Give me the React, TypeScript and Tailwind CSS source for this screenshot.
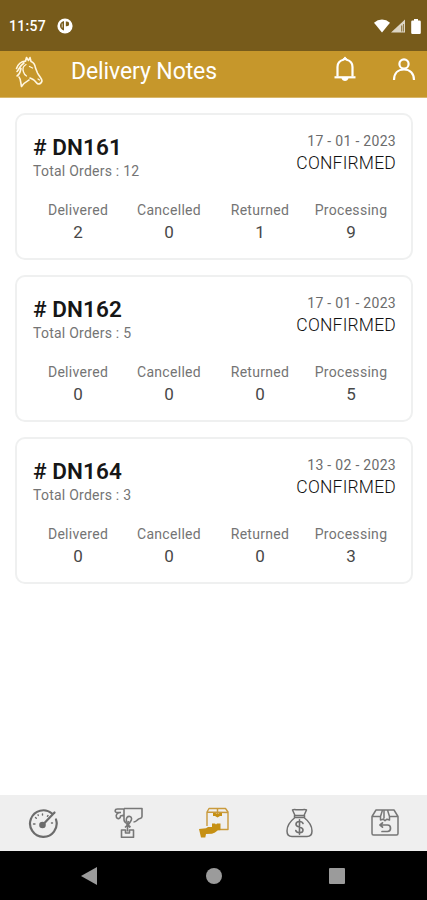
type Note = {
    id: string;
    total: number;
    date: string;
    counts: number[];
};

const notes: Note[] = [
    { id: "DN161", total: 12, date: "17 - 01 - 2023", counts: [2, 0, 1, 9] },
    { id: "DN162", total: 5, date: "17 - 01 - 2023", counts: [0, 0, 0, 5] },
    { id: "DN164", total: 3, date: "13 - 02 - 2023", counts: [0, 0, 0, 3] },
];

const labels = ["Delivered", "Cancelled", "Returned", "Processing"];

const StatusBar = () => {
    return (
        <div className="h-[51px] shrink-0 bg-[#775b1b] flex items-center pt-px pl-[9px] pr-[6px] text-white">
            <span className="text-[14px] leading-4 font-medium tracking-[0.3px] w-12">11:57</span>
            <svg className="w-4 h-4" viewBox="0 0 16 16">
                <circle cx="8" cy="8" r="7.6" fill="#fff" />
                <path d="M7 3v9.500Q3 11 3 7.500T7 3z" fill="#775b1b" />
                <path d="M8.800 3.500h1a2.400 2.400 0 0 1 0 4.800h-1z" fill="#775b1b" />
                <path d="M5.200 5.500v4" stroke="#fff" strokeWidth=".7" />
            </svg>
            <svg className="ml-auto w-4 h-[14px]" viewBox="0 0 16 14">
                <path d="M0 3.700Q3.500.5 8 .5t8 3.200L8 13.500z" fill="#fff" />
            </svg>
            <svg className="ml-px w-[15px] h-[14px]" viewBox="0 0 15 14">
                <path d="M0 13.500L14 .5v13z" fill="#fff" fillOpacity=".75" />
                <path d="M10 6.500h1.300v6H10zM12 5h1v7.500h-1z" fill="#775b1b" fillOpacity=".7" />
            </svg>
            <svg className="ml-[5px] w-[10px] h-[15px]" viewBox="0 0 10 15">
                <path d="M3 0h4v1.600h1.600q1.200 0 1.200 1.200v11q0 1.200-1.200 1.200H1.400Q.2 15 .2 13.800v-11q0-1.200 1.200-1.200H3z" fill="#fff" />
            </svg>
        </div>
    );
};

const Horse = () => {
    return (
        <svg className="w-7 h-8" viewBox="0 0 28 32" fill="none" stroke="#fff6df" strokeWidth="1.600" strokeLinecap="round" strokeLinejoin="round">
            <path d="M10.500 5l1-3.500 2 3 1.500-3 1 4c3 1 4 3 4.500 6.500l2 5c1.500 3 4.500 5.500 4.500 8-.5 2-2 3-4 3-1.500-.5-2-2-3.500-3.500-1.500-1.500-3-1.800-4.500-2.500" />
            <path d="M10.500 5C6 5.500 3 8 1.500 12.500M9 7C5 9.500 4 13.500 2 15.500M6 12.500c-1 4-1 6-4 7.500M4 21c2 2 1.500 6 2.500 9.500 2-3.500 4-4.500 7.500-6.500" />
            <path d="M11 8.500C8 10 7.500 13 8.500 16c.5 2 1.500 3 3 4M14.500 10.500l3 1.500M23 23l1.500 1" strokeWidth="1.300" />
        </svg>
    );
};

const Header = () => {
    return (
        <div className="h-[47px] shrink-0 bg-[#c6972b] border-b border-[#d8b76b] flex items-start pl-[15px] pr-[11px] text-white">
            <div className="mt-[5px]">
                <Horse />
            </div>
            <h1 className="ml-7 mt-[6px] text-[23px] leading-[30px] tracking-[-0.1px]">Delivery Notes</h1>
            <svg className="ml-auto mt-[5px] w-[22px] h-[26px]" viewBox="0 0 22 26" fill="none" stroke="#fff" strokeWidth="2.200">
                <path d="M3.500 20.500V11c0-4 2.500-6.500 5.800-7.300L11 2.500l1.700 1.200C16 4.500 18.500 7 18.500 11v9.500" />
                <path d="M.5 21.300h21" />
                <path d="M7.500 22h7c-.5 4-6.500 4-7 0z" fill="#fff" stroke="none" />
                <path d="M11 .5l2.500 3h-5z" fill="#fff" stroke="none" />
            </svg>
            <svg className="ml-9 mt-[7px] w-6 h-6" viewBox="0 0 24 24" fill="none" stroke="#fff" strokeWidth="2.200">
                <circle cx="12" cy="6" r="4.600" />
                <path d="M2 22c0-6.500 4-10.500 10-10.500S22 15.500 22 22" />
            </svg>
        </div>
    );
};

const NoteCard = ({ note }: { note: Note }) => {
    return (
        <div className="h-[147px] shrink-0 rounded-[10px] border-2 border-[#eff0f0] bg-white px-[15px]">
            <div className="flex justify-between">
                <div className="pl-px">
                    <h2 className="mt-[18px] text-[22.500px] leading-7 font-semibold tracking-[0.08px] text-[#161616]">
                        <span className="font-medium"># </span>{note.id}
                    </h2>
                    <p className="mt-px text-[14px] leading-[18px] tracking-[0.24px] text-[#747474]">Total Orders : {note.total}</p>
                </div>
                <div className="text-right">
                    <p className="mt-[17px] text-[14px] leading-[18px] tracking-[0.3px] text-[#6c6c6c]">{note.date}</p>
                    <p className="mt-px text-[17.500px] leading-6 font-light tracking-[0.2px] text-[#111]">CONFIRMED</p>
                </div>
            </div>
            <div className="mt-[21px] grid grid-cols-4 text-center">
                {labels.map((label, i) => (
                    <div key={label}>
                        <p className="pl-px text-[14px] leading-[18px] tracking-[0.3px] text-[#747474]">{label}</p>
                        <p className="mt-px pl-px text-[17px] leading-6 text-[#484848]">{note.counts[i]}</p>
                    </div>
                ))}
            </div>
        </div>
    );
};

const TabBar = () => {
    return (
        <div className="h-14 shrink-0 bg-[#efefef] grid grid-cols-5 items-center justify-items-center pl-px">
            {/* Dashboard */}
            <svg className="mr-[2px] mb-px w-[30px] h-[30px]" viewBox="0 0 30 30" fill="none" stroke="#6c6c6c" strokeWidth="2.200" strokeLinecap="round">
                <path d="M24 5.500A13.300 13.300 0 1 0 28 11.500" />
                <path d="M26.500 4.500L15.500 16" strokeWidth="2.200" />
                <circle cx="14.500" cy="17" r="3.300" fill="#6c6c6c" stroke="none" />
                <path d="M5.500 16h1.500M7.500 9.500l.8.8M14.500 6v1M20 7.500l-.6.8M23.500 15h1M10 6.800l.3.600" strokeWidth="1.400" />
            </svg>
            {/* Pickup */}
            <svg className="mb-px w-[30px] h-[31px]" viewBox="0 0 30 31" fill="none" stroke="#777" strokeWidth="1.600" strokeLinejoin="round">
                <path d="M10 1.500h18V9.500c0 2.500-2.500 1.500-4 3-1.500 1-2 2.500-4.500 2.500M10 2H3.500C.5 2 .5 5.500 3 5.500h3.500M7 5.500c-4 0-5.500 2.500-4.500 5 1.300 2 4.300 1 4-1.500l3.500-1V2M10 8v4.500c0 2 1 3 3 4" />
                <path d="M12.500 15c-1-4 1-6 3.500-5.500 2 .7 2 3 .5 5l-3 4.500M14.500 14l-1.500 3.500 3.500 2.500" />
                <path d="M7.500 23h4v3h4v-3h4v7.300h-12zM13.500 18v6.500M11 20.500l2.500-2.500 2.500 2.500" />
            </svg>
            {/* Delivery */}
            <svg className="mb-px w-[30px] h-[31px]" viewBox="0 0 30 31" fill="none" stroke="#c99a3c" strokeWidth="1.400" strokeLinejoin="round">
                <path d="M8 19V5l2-3.500h16.500L29 5v17.500h-9M8 5l21 .5" />
                <path d="M18.500 1.500v6" strokeWidth="1.500" />
                <path d="M14 6h2.500l2 1 2-1H23v3h-2l-2.500 1.500L16 9h-2zM0 22l7-.7 2-1.300h4v-3.500h3l1 1 1-1h3.500V23l-3 .5c-2 2-4 2.800-5.500 3.200l-6 .3-.7 3.500H2z" fill="#c69014" stroke="none" />
            </svg>
            {/* Payments */}
            <svg className="w-[27px] h-[30px]" viewBox="0 0 27 30" fill="none" stroke="#707070" strokeWidth="1.500" strokeLinecap="round" strokeLinejoin="round">
                <path d="M9 7.500L6.500 2c2.300-1.500 4 .5 7-.3 2.500.8 4.500-1.200 7 .3L18 7.500M8.500 7.500h10v2h-10zM9 9.500C4.500 13 1 18 1 23c0 3.500 1.500 5.500 5 5.500h15c3.500 0 5-2 5-5.500 0-5-3.500-10-8-13.500" />
                <path d="M17 15.500c-.5-1.500-2-2-3.500-2-2 0-3.500 1-3.500 2.700 0 4 7 1.800 7 5.800 0 1.800-1.500 2.700-3.500 2.700-1.800 0-3.300-.7-3.700-2.200M13.500 11.800v14.400" strokeWidth="1.600" />
            </svg>
            {/* Returns */}
            <svg className="ml-[2px] mb-px w-7 h-[29px]" viewBox="0 0 28 29" fill="none" stroke="#777" strokeWidth="1.500" strokeLinecap="round" strokeLinejoin="round">
                <path d="M1 8.500L5 2h18l4 6.500v17c0 1-.5 1.500-1.500 1.500h-23C1.500 27 1 26.500 1 25.500zM1 8.500h8.500M18.500 8.500H27M11.500 2l-2 6.500v3.500l2.500-.8 2 1.500 2-1.500 2.500.8V8.500l-2-6.500M13 2v8" />
                <path d="M9 17h7.500c4 0 4 6.500 0 6.500H11M11.500 14.800L9 17l2.500 2.200" strokeWidth="1.700" />
            </svg>
        </div>
    );
};

const SystemNav = () => {
    return (
        <div className="h-[49px] shrink-0 bg-black grid grid-cols-[180px_67px_180px] items-center justify-items-center">
            <svg className="mr-[2px] w-4 h-[18px]" viewBox="0 0 16 18">
                <path d="M16 0v18L0 9z" fill="#9b9b9b" />
            </svg>
            <div className="w-4 h-4 rounded-full bg-[#9b9b9b]"></div>
            <div className="w-4 h-4 rounded-[1px] bg-[#9b9b9b]"></div>
        </div>
    );
};

const App = () => {
    return (
        <div className="w-full h-screen flex flex-col bg-white font-['Roboto',sans-serif] overflow-hidden">
            <StatusBar />
            <Header />
            <main className="flex-1 flex flex-col gap-[15px] pt-[15px] pl-[15px] pr-[14px]">
                {notes.map((note) => (
                    <NoteCard key={note.id} note={note} />
                ))}
            </main>
            <TabBar />
            <SystemNav />
        </div>
    );
};

export default App;
